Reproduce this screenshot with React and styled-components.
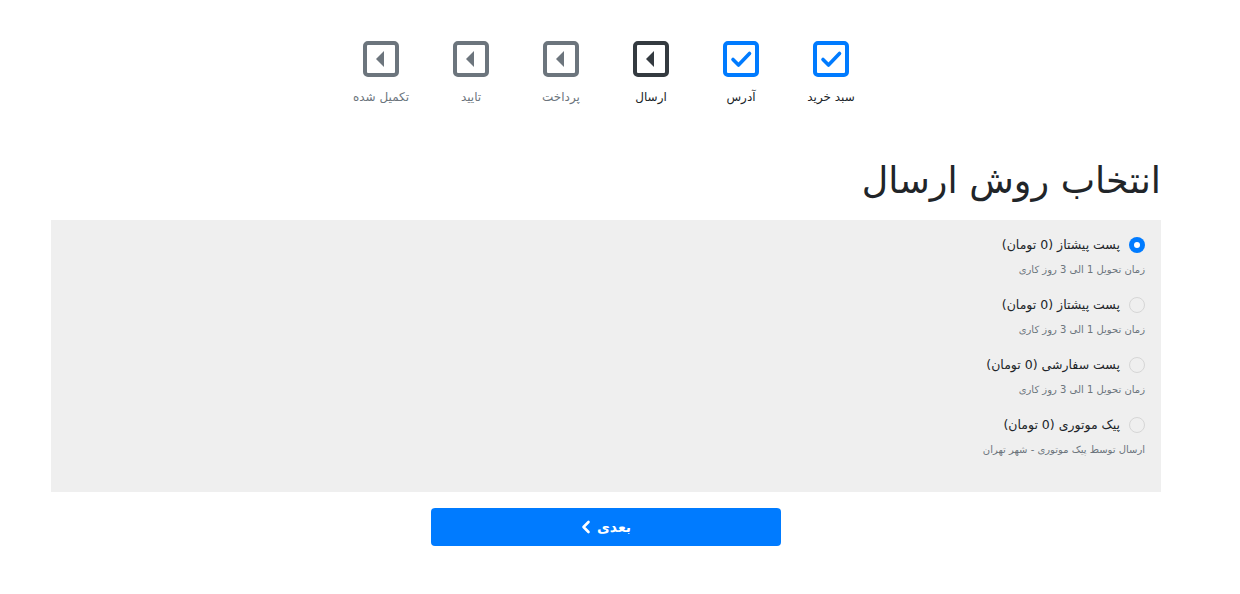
import React from 'react';
import styled, { createGlobalStyle } from 'styled-components';

const GlobalStyle = createGlobalStyle`
    body {
        margin: 0;
        background: #fff;
        font-family: "DejaVu Sans", "Noto Sans", sans-serif;
        color: #212529;
    }
`;

const Page = styled.div`
    width: 1110px;
    margin-left: 51px;
    direction: rtl;
`;

const Steps = styled.ul`
    list-style: none;
    margin: 0;
    padding: 41px 0 0;
    display: flex;
    justify-content: center;
`;

const Step = styled.li`
    width: 90px;
    display: flex;
    flex-direction: column;
    align-items: center;
    color: ${p => (p.$state === 'todo' ? '#6c757d' : '#212529')};
`;

const StepLabel = styled.span`
    margin-top: 12px;
    font-size: 12px;
    line-height: 16px;
`;

const Title = styled.h2`
    margin: 48px 0 0;
    font-size: 36.5px;
    font-weight: 400;
    line-height: 56px;
    text-align: right;
`;

const Options = styled.div`
    margin-top: 11px;
    background: #efefef;
    padding: 15px 16px 35px;
    display: flex;
    flex-direction: column;
    gap: 18px;
`;

const Option = styled.label`
    display: flex;
    flex-direction: column;
    align-items: flex-start;
`;

const OptionRow = styled.div`
    display: flex;
    align-items: center;
    gap: 9px;
    font-size: 12.5px;
    line-height: 20px;
`;

const Radio = styled.span`
    width: 16px;
    height: 16px;
    box-sizing: border-box;
    border-radius: 50%;
    flex-shrink: 0;
    background: ${p => (p.$checked ? '#007bff' : 'transparent')};
    border: ${p => (p.$checked ? 'none' : '1px solid #d6d6d6')};
    display: flex;
    align-items: center;
    justify-content: center;

    &::after {
        content: '';
        width: 6px;
        height: 6px;
        border-radius: 50%;
        background: #fff;
        display: ${p => (p.$checked ? 'block' : 'none')};
    }
`;

const Hint = styled.small`
    display: block;
    margin-top: 8px;
    font-size: 10px;
    line-height: 14px;
    color: #6c757d;
`;

const Footer = styled.div`
    display: flex;
    justify-content: center;
    padding-top: 16px;
`;

const NextButton = styled.button`
    width: 350px;
    height: 38px;
    border: 0;
    border-radius: 4px;
    background: #007bff;
    color: #fff;
    font-family: inherit;
    font-size: 14px;
    font-weight: 700;
    display: flex;
    align-items: center;
    justify-content: center;
    gap: 6px;
    direction: rtl;
`;

const colors = { done: '#007bff', current: '#343a40', todo: '#6c757d' };

const StepIcon = ({ state }) => {
    const c = colors[state];
    return (
        <svg width="36" height="36" viewBox="0 0 36 36">
            <rect x="2" y="2" width="32" height="32" rx="3" fill="none" stroke={c} strokeWidth="4" />
            {state === 'done' ? (
                <path d="M10 18.5 L15.5 24 L26.5 12.5" fill="none" stroke={c} strokeWidth="3.6" strokeLinecap="round" strokeLinejoin="round" />
            ) : (
                <path d="M21 10 L21 26 L13 18 Z" fill={c} />
            )}
        </svg>
    );
};

const Chevron = () => (
    <svg width="10" height="14" viewBox="0 0 10 14">
        <path d="M7.5 2 L2.5 7 L7.5 12" fill="none" stroke="#fff" strokeWidth="2.6" strokeLinecap="round" strokeLinejoin="round" />
    </svg>
);

const steps = [
    { label: 'سبد خرید', state: 'done' },
    { label: 'آدرس', state: 'done' },
    { label: 'ارسال', state: 'current' },
    { label: 'پرداخت', state: 'todo' },
    { label: 'تایید', state: 'todo' },
    { label: 'تکمیل شده', state: 'todo' },
];

const methods = [
    { title: 'پست پیشتاز (0 تومان)', hint: 'زمان تحویل 1 الی 3 روز کاری', checked: true },
    { title: 'پست پیشتاز (0 تومان)', hint: 'زمان تحویل 1 الی 3 روز کاری' },
    { title: 'پست سفارشی (0 تومان)', hint: 'زمان تحویل 1 الی 3 روز کاری' },
    { title: 'پیک موتوری (0 تومان)', hint: 'ارسال توسط پیک موتوری - شهر تهران' },
];

export default function App() {
    return (
        <>
            <GlobalStyle />
            <Page>
                <Steps>
                    {steps.map(s => (
                        <Step key={s.label} $state={s.state}>
                            <StepIcon state={s.state} />
                            <StepLabel>{s.label}</StepLabel>
                        </Step>
                    ))}
                </Steps>
                <Title>انتخاب روش ارسال</Title>
                <Options>
                    {methods.map((m, i) => (
                        <Option key={i}>
                            <OptionRow>
                                <Radio $checked={m.checked} />
                                <span>{m.title}</span>
                            </OptionRow>
                            <Hint>{m.hint}</Hint>
                        </Option>
                    ))}
                </Options>
                <Footer>
                    <NextButton>
                        <span>بعدی</span>
                        <Chevron />
                    </NextButton>
                </Footer>
            </Page>
        </>
    );
}
